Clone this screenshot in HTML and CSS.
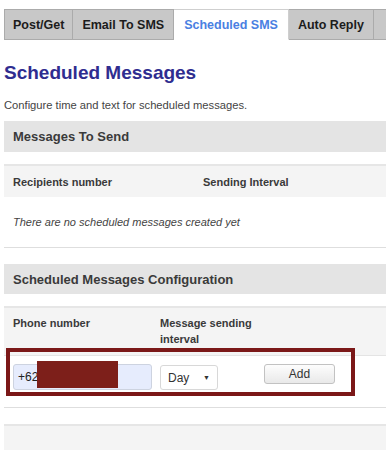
FILE: index.html
```html
<!DOCTYPE html>
<html lang="en">
<head>
    <meta charset="UTF-8">
    <title>Scheduled SMS</title>
    <meta name="viewport" content="width=device-width, initial-scale=1.0">
    <link rel="stylesheet" href="styles.css">
</head>
<body>
<nav class="tabs">
    <a class="tab">Post/Get</a>
    <a class="tab">Email To SMS</a>
    <a class="tab active">Scheduled SMS</a>
    <a class="tab">Auto Reply</a>
    <a class="tab">SMS</a>
</nav>
<main class="page">
    <h1 class="title">Scheduled Messages</h1>
    <p class="intro">Configure time and text for scheduled messages.</p>

    <h2 class="panel-title">Messages To Send</h2>
    <table class="grid grid-list">
        <tr class="head">
            <th class="col-recipient">Recipients number</th>
            <th>Sending Interval</th>
        </tr>
        <tr class="empty">
            <td colspan="2">There are no scheduled messages created yet</td>
        </tr>
    </table>

    <h2 class="panel-title">Scheduled Messages Configuration</h2>
    <table class="grid grid-config">
        <tr class="head">
            <th class="col-phone">Phone number</th>
            <th class="col-interval">Message sending<br>interval</th>
            <th></th>
        </tr>
        <tr class="form-row">
            <td><input class="phone" type="text" value="+62"></td>
            <td>
                <div class="select">Day <span class="arrow">&#9660;</span></div>
            </td>
            <td><button class="btn">Add</button></td>
        </tr>
    </table>

    <div class="footer-box"></div>

    <!-- screenshot annotations -->
    <div class="mark-box"></div>
    <div class="redact"></div>
</main>
</body>
</html>
```

FILE: styles.css
```css
html {
    overflow: hidden;
}
body {
    margin: 0;
    padding: 9px 0 0 4px;
    font-family: "Liberation Sans", Arial, sans-serif;
    color: #444;
    background: #fff;
}
.tabs {
    display: flex;
    flex-wrap: nowrap;
    white-space: nowrap;
    height: 31px;
}
.tab {
    display: flex;
    align-items: center;
    flex-shrink: 0;
    padding: 0 9px;
    background: #c8c8c8;
    border: 1px solid #ababab;
    border-left-width: 0;
    font-size: 12.5px;
    font-weight: bold;
    color: #1c1c1c;
}
.tab:first-child {
    border-left-width: 1px;
    padding: 0 8px;
}
.tab.active {
    background: #fff;
    color: #4a80e2;
    border-color: #cfcfcf;
    border-bottom-color: #fff;
    padding: 0 10px;
}
.tab:last-child {
    padding-left: 12px;
}
.page {
    position: relative;
    padding-top: 22px;
}
.title {
    margin: 0;
    font-size: 19px;
    line-height: 22px;
    color: #2f2d90;
}
.intro {
    margin: 15px 0 0;
    font-size: 11.2px;
    line-height: 13px;
    color: #444;
}
.panel-title {
    margin: 9px 0 0;
    height: 31px;
    display: flex;
    align-items: center;
    padding-left: 9px;
    background: #e4e4e4;
    font-size: 13px;
    color: #3a3a3a;
}
.grid {
    width: 100%;
    table-layout: fixed;
    border-collapse: collapse;
    margin-top: 12px;
    font-size: 11px;
}
.grid th {
    text-align: left;
    vertical-align: top;
    padding: 0 9px;
    white-space: nowrap;
    color: #3a3a3a;
}
.grid .head {
    background: #f4f4f4;
    border-top: 2px solid #e6e6e6;
}
.grid-list .head th {
    height: 31px;
    vertical-align: middle;
}
.col-recipient {
    width: 172px;
}
.empty td {
    height: 50px;
    padding: 0 9px;
    font-style: italic;
    color: #444;
    border-bottom: 1px solid #dedede;
}
.grid-list + .panel-title {
    margin-top: 16px;
    height: 30px;
}
.grid-config .head th {
    padding-top: 7px;
    padding-bottom: 8px;
    line-height: 16px;
}
.col-phone {
    width: 129px;
}
.col-interval {
    width: 86px;
}
.form-row td {
    height: 43px;
    padding: 8px 9px 0;
    vertical-align: top;
    border-top: 1px solid #e4e4e4;
    border-bottom: 1px solid #dedede;
}
.phone {
    display: block;
    box-sizing: border-box;
    width: 139px;
    height: 26px;
    margin: 0;
    padding: 0 4px;
    border: 1px solid #cdd3e0;
    border-radius: 3px;
    background: #e6ecfd;
    font-family: inherit;
    font-size: 12px;
    color: #222;
}
.select {
    box-sizing: border-box;
    width: 58px;
    height: 25px;
    margin-top: 1px;
    display: flex;
    align-items: center;
    justify-content: space-between;
    padding: 0 7px;
    border: 1px solid #d8d8d8;
    border-radius: 3px;
    background: #fff;
    font-size: 12px;
    color: #333;
}
.arrow {
    font-size: 7px;
    color: #333;
}
.btn {
    display: block;
    box-sizing: border-box;
    width: 71px;
    height: 20px;
    border: 1px solid #c2c2c2;
    border-radius: 3px;
    background: linear-gradient(#fdfdfd, #e9e9e9);
    font-family: inherit;
    font-size: 12px;
    color: #333;
}
.footer-box {
    margin-top: 16px;
    height: 40px;
    background: #f4f4f4;
    border-top: 2px solid #e6e6e6;
}
.mark-box {
    position: absolute;
    left: 2px;
    top: 308px;
    width: 341px;
    height: 40px;
    border: 4px solid #7b1818;
}
.redact {
    position: absolute;
    left: 33px;
    top: 321px;
    width: 81px;
    height: 27px;
    background: #7d1f1a;
}
```
